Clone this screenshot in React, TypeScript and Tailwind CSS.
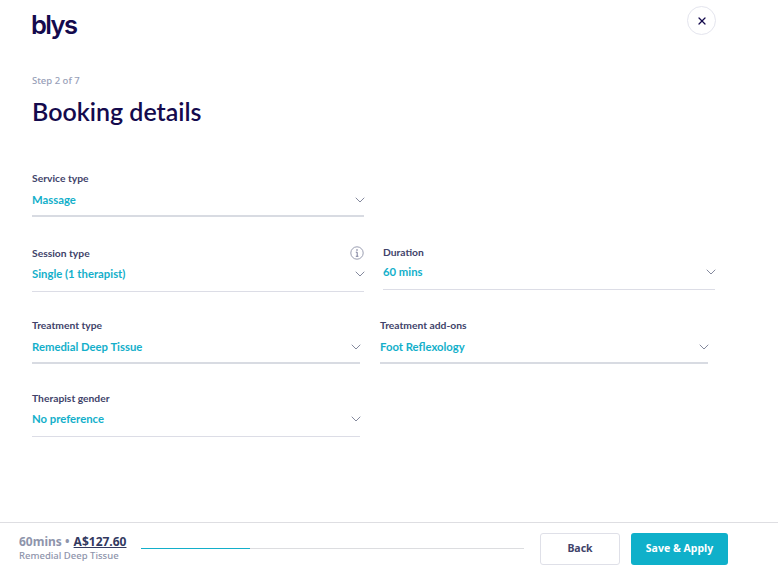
import React from 'react';
import { ChevronDown, X } from 'lucide-react';

type FieldProps = {
  label: string;
  value: string;
  width: string;
  valueClass: string;
  lineClass: string;
  info?: boolean;
};

const Field = ({ label, value, width, valueClass, lineClass, info }: FieldProps) => {
  return (
    <div className={`relative ${width}`}>
      <p className="h-[16px] text-[10.3px] font-bold leading-[16px] text-[#41436a]">{label}</p>
      {info && (
        <svg className="absolute right-0 top-[1px]" width="14" height="14" viewBox="0 0 14 14" fill="none">
          <circle cx="7" cy="7" r="6.2" stroke="#8f93a8" strokeWidth="0.9" />
          <path d="M5.8 6.2H7.2V10.2M5.8 10.3H8.4" stroke="#6d7190" strokeWidth="0.9" />
          <circle cx="7" cy="4" r="0.8" fill="#6d7190" />
        </svg>
      )}
      <div className={`flex h-[17px] items-center justify-between ${valueClass}`}>
        <span className="text-[11.3px] font-bold leading-[17px] text-[#13afca]">{value}</span>
        <ChevronDown size={16} strokeWidth={1.4} className="mr-[-4px] text-[#7b8096]" />
      </div>
      <div className={lineClass} />
    </div>
  );
};

export default function App() {
  return (
    <div className="flex h-[568px] w-[778px] flex-col overflow-hidden bg-white font-['Lato',sans-serif]">
      <div className="flex-1 pl-[32px]">
        <div className="flex h-[64px] items-start justify-between pr-[62px] pt-[6px]">
          <span className="mt-[1px] ml-[-1px] font-['Inter',sans-serif] text-[25.5px] font-semibold leading-[36px] tracking-[-1.6px] text-[#140a4d]">
            blys
          </span>
          <button className="flex h-[29px] w-[29px] items-center justify-center rounded-full border border-[#e4e5ee] text-[#140a4d]">
            <X size={12} strokeWidth={2.5} />
          </button>
        </div>

        <p className="mt-[10px] font-['Noto_Sans',sans-serif] text-[9.5px] font-medium leading-[14px] text-[#98a0b8]">Step 2 of 7</p>
        <h1 className="mt-[8px] text-[25px] font-semibold leading-[30px] text-[#140a4d]">Booking details</h1>

        <div className="mt-[44px]">
          <Field label="Service type" value="Massage" width="w-[332px]" valueClass="mt-[5px]" lineClass="mt-[7px] h-[2px] bg-[#d8dbe2]" />
        </div>

        <div className="mt-[27px] flex items-start gap-[19px]">
          <div className="pt-[1px]">
            <Field label="Session type" value="Single (1 therapist)" width="w-[332px]" valueClass="mt-[4px]" lineClass="mt-[9px] h-[1px] bg-[#dcdde6]" info />
          </div>
          <Field label="Duration" value="60 mins" width="w-[332px]" valueClass="mt-[3px]" lineClass="mt-[9px] h-[1px] bg-[#dcdde6]" />
        </div>

        <div className="mt-[25px] flex items-start gap-[20px]">
          <Field label="Treatment type" value="Remedial Deep Tissue" width="w-[328px]" valueClass="mt-[5px]" lineClass="mt-[7px] h-[2px] bg-[#d8dbe2]" />
          <Field label="Treatment add-ons" value="Foot Reflexology" width="w-[328px]" valueClass="mt-[5px]" lineClass="mt-[7px] h-[2px] bg-[#d8dbe2]" />
        </div>

        <div className="mt-[26px]">
          <Field label="Therapist gender" value="No preference" width="w-[328px]" valueClass="mt-[4px]" lineClass="mt-[9px] h-[1px] bg-[#dcdde6]" />
        </div>
      </div>

      <div className="flex h-[46px] items-center border-t border-[#dedee2] pl-[19px] pt-[6px] font-['Noto_Sans',sans-serif]">
        <div className="mb-[2px] w-[122px]">
          <p className="whitespace-nowrap text-[12px] font-bold leading-[16px] text-[#8e94ab]">
            60mins •{' '}
            <span className="ml-[1px] text-[#33395f] underline">A$127.60</span>
          </p>
          <p className="text-[9.5px] font-medium leading-[12px] text-[#8e94ab]">Remedial Deep Tissue</p>
        </div>
        <div className="h-[1px] w-[383px] bg-[#dcdde0]">
          <div className="h-[1px] w-[109px] bg-[#13afca]" />
        </div>
        <button className="ml-[16px] h-[32px] w-[80px] rounded-[3px] border border-[#dfe0e8] text-[10.5px] font-bold text-[#41436a]">
          Back
        </button>
        <button className="ml-[11px] h-[32px] w-[97px] rounded-[3px] bg-[#0fb0ca] text-[10.5px] font-bold text-white">
          Save &amp; Apply
        </button>
      </div>
    </div>
  );
}
